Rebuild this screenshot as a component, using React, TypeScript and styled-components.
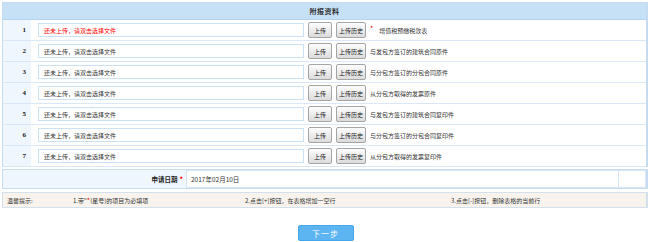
import styled, { createGlobalStyle } from 'styled-components';

const GlobalStyle = createGlobalStyle`
  html, body {
    margin: 0;
    padding: 0;
    background: #fff;
  }
  body {
    font-family: "Noto Sans CJK SC", "Liberation Sans", sans-serif;
    color: #333;
  }
`;

const Page = styled.div`
  width: 650px;
  padding: 2px 2px 0 2px;
  box-sizing: border-box;
`;

const Table = styled.div`
  border: 1px solid #c4dbf0;
  border-bottom: none;
  border-right-width: 2px;
`;

const Header = styled.div`
  height: 16px;
  background: #c6e1f5;
  border-bottom: 1px solid #b5d3ee;
  display: flex;
  align-items: center;
  justify-content: center;
  font-size: 7px;
  font-weight: bold;
  color: #333;
  letter-spacing: 0.5px;
`;

const Row = styled.div`
  height: 20px;
  display: flex;
  border-bottom: 1.5px solid #d9e7f6;
`;

const NumCell = styled.div`
  width: 28px;
  background: #eff6fd;
  display: flex;
  align-items: center;
  justify-content: flex-end;
  padding-right: 5px;
  box-sizing: border-box;
  font-size: 7px;
  font-weight: bold;
  font-family: "Liberation Serif", serif;
  color: #222;
`;

const ContentCell = styled.div`
  flex: 1;
  display: flex;
  align-items: center;
  padding-left: 7px;
  background: #fff;
`;

const FileInput = styled.div<{ empty?: boolean }>`
  width: 266px;
  height: 14px;
  border: 1px solid #cbe1f6;
  box-sizing: border-box;
  display: flex;
  align-items: center;
  padding-left: 5px;
  font-size: 6px;
  color: ${p => (p.empty ? '#f00' : '#333')};
`;

const Btn = styled.div<{ w: number }>`
  width: ${p => p.w}px;
  height: 16px;
  margin-left: 4px;
  box-sizing: border-box;
  border: 1px solid #a5a5a5;
  border-radius: 2px;
  background: linear-gradient(#fdfdfd, #dcdcdc);
  display: flex;
  align-items: center;
  justify-content: center;
  font-size: 6px;
  color: #222;
`;

const Desc = styled.div`
  margin-left: 4px;
  font-size: 6px;
  color: #333;
  display: flex;
  align-items: center;
`;

const Star = styled.span`
  color: #f00;
  font-size: 7px;
  margin-right: 6px;
  position: relative;
  top: -2px;
`;

const DateRow = styled.div`
  margin-top: 2px;
  height: 18px;
  display: flex;
  border: 1px solid #c8dcf0;
  border-right-width: 2px;
  background: #eff6fd;
`;

const DateLabel = styled.div`
  width: 180px;
  display: flex;
  align-items: center;
  justify-content: flex-end;
  padding-right: 3px;
  font-size: 6.5px;
  font-weight: bold;
  color: #222;
`;

const DateValue = styled.div`
  flex: 1;
  background: #fff;
  border: 1px solid #d6e6f6;
  display: flex;
  align-items: center;
  padding-left: 4px;
  font-size: 6.5px;
  color: #333;
`;

const DateTail = styled.div`
  width: 26px;
  background: #fff;
  border: 1px solid #d6e6f6;
  border-left: none;
`;

const Tips = styled.div`
  margin-top: 3px;
  height: 14px;
  display: grid;
  grid-template-columns: 66px 172px 206px 1fr;
  align-items: center;
  background: #f8f3ec;
  border: 1px solid #d3e1ef;
  border-right-width: 2px;
  padding-left: 4px;
  font-size: 6px;
  color: #333;
`;

const Footer = styled.div`
  display: flex;
  justify-content: center;
  padding-top: 17px;
  padding-left: 1px;
`;

const NextButton = styled.div`
  width: 56px;
  height: 16px;
  box-sizing: border-box;
  background: #5cb5f1;
  border: 1px solid #47a5e8;
  border-radius: 2px;
  display: flex;
  align-items: center;
  justify-content: center;
  font-size: 8px;
  color: #fff;
  letter-spacing: 1px;
`;

const rows = [
  { desc: '增值税预缴税款表', required: true },
  { desc: '与发包方签订的建筑合同原件' },
  { desc: '与分包方签订的分包合同原件' },
  { desc: '从分包方取得的发票原件' },
  { desc: '与发包方签订的建筑合同复印件' },
  { desc: '与分包方签订的分包合同复印件' },
  { desc: '从分包方取得的发票复印件' },
];

function App() {
  return (
    <Page>
      <GlobalStyle />
      <Table>
        <Header>附报资料</Header>
        {rows.map((r, i) => (
          <Row key={i}>
            <NumCell>{i + 1}</NumCell>
            <ContentCell>
              <FileInput empty={i === 0}>还未上传，请双击选择文件</FileInput>
              <Btn w={24}>上传</Btn>
              <Btn w={30}>上传历史</Btn>
              <Desc>
                {r.required && <Star>*</Star>}
                {r.desc}
              </Desc>
            </ContentCell>
          </Row>
        ))}
      </Table>
      <DateRow>
        <DateLabel>
          申请日期<Star style={{ margin: '0 0 0 2px', top: 0 }}>*</Star>
        </DateLabel>
        <DateValue>2017年02月10日</DateValue>
        <DateTail />
      </DateRow>
      <Tips>
        <span>温馨提示:</span>
        <span>
          1.带"<Star style={{ margin: 0, top: 0 }}>*</Star>(星号)的项目为必填项
        </span>
        <span>2.点击[+]按钮，在表格增加一空行</span>
        <span>3.点击[-]按钮，删除表格的当前行</span>
      </Tips>
      <Footer>
        <NextButton>下一步</NextButton>
      </Footer>
    </Page>
  );
}

export default App;
